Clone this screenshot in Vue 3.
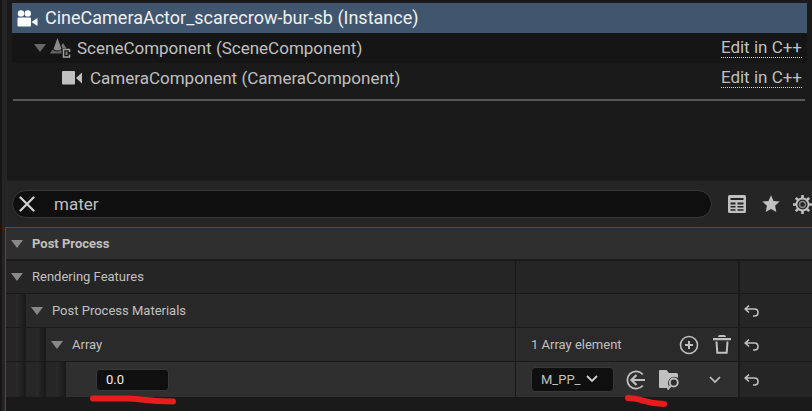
<script setup>
import { ref } from 'vue'

const query = ref('mater')
const intensity = ref('0.0')
const asset = ref('M_PP_')

const rows = [
  { id: 'rendering', label: 'Rendering Features', depth: 0 },
  { id: 'materials', label: 'Post Process Materials', depth: 1, reset: true },
  { id: 'array', label: 'Array', depth: 2, reset: true },
  { id: 'item', label: '', depth: 3, reset: true },
]
</script>

<template>
  <main class="panel">
    <section class="tree" aria-label="Components">
      <div class="node selected">
        <svg class="cine" width="21" height="17" viewBox="0 0 21 17" aria-hidden="true">
          <circle cx="4" cy="3.4" r="3.2" /><circle cx="10.8" cy="3.4" r="3.2" />
          <rect x="0.5" y="7.5" width="13.5" height="9" rx="1" />
          <path d="M14.5 12L20.500 8v8z" />
        </svg>
        <span>CineCameraActor_scarecrow-bur-sb (Instance)</span>
      </div>
      <div class="node scene">
        <button class="toggle dim" aria-label="Collapse SceneComponent">
          <svg width="12" height="8" viewBox="0 0 12 8"><path d="M0 0h12L6 8z" /></svg>
        </button>
        <svg class="scene-icon" width="21" height="20" viewBox="0 0 21 20" aria-hidden="true">
          <path d="M7.5 0L11.5 11Q7.5 14 3.5 11z" fill="#8b8b8b" />
          <path d="M13 5l3.500 5.500h-4l-1-3z" fill="#777" />
          <path d="M2.500 11.500Q7 15 11.500 12v3.500H0z" fill="#626262" />
          <path d="M19.500 14v-2.500h-6v7.500h6v-2.500" fill="none" stroke="#a0a0a0" stroke-width="1.500" />
          <path d="M15.500 13.500h2v3.500h-2z" fill="#777" />
        </svg>
        <span>SceneComponent (SceneComponent)</span>
        <a href="#scene">Edit in C++</a>
      </div>
      <div class="node camera">
        <svg class="cam-icon" width="21" height="14" viewBox="0 0 21 14" aria-hidden="true">
          <rect width="13" height="13.5" rx="1" /><path d="M14 7l6-5.500v11z" />
        </svg>
        <span>CameraComponent (CameraComponent)</span>
        <a href="#camera">Edit in C++</a>
      </div>
      <hr />
    </section>

    <section class="toolbar">
      <div class="search">
        <button aria-label="Clear search">
          <svg width="16" height="16" viewBox="0 0 16 16"><path d="M1.500 1.500l13 13M14.500 1.500l-13 13" fill="none" stroke="#d0d0d0" stroke-width="2.200" stroke-linecap="round" /></svg>
        </button>
        <input v-model="query" type="text" aria-label="Search details" />
      </div>
      <button aria-label="Property matrix">
        <svg width="18" height="18" viewBox="0 0 18 18">
          <rect width="18" height="18" rx="1.500" />
          <path d="M2.500 3h13v2h-13zM2.500 7.500h5v2h-5zM9.500 7.500h6v2h-6zM2.500 11h5v1.500h-5zM9.500 11h6v1.500h-6zM2.500 14.200h5v1.600h-5zM9.500 14.200h6v1.600h-6z" fill="#252525" />
        </svg>
      </button>
      <button aria-label="Favorites">
        <svg width="18" height="18" viewBox="0 0 18 18"><path d="M9 .3l2.500 5.600 6.100.7-4.500 4.100 1.200 6.300L9 14l-5.300 3 1.200-6.300L.4 6.600l6.100-.7z" /></svg>
      </button>
      <button aria-label="Settings">
        <svg width="19" height="19" viewBox="0 0 19 19" fill="none" stroke="#c0c0c0">
          <circle cx="9.500" cy="9.500" r="6" stroke-width="1.800" />
          <circle cx="9.500" cy="9.500" r="3" stroke="#858585" stroke-width="1.400" />
          <path d="M9.500 0v3M9.500 16v3M0 9.500h3M16 9.500h3M2.800 2.800l2.200 2.200M14 14l2.200 2.200M2.800 16.200L5 14M14 5l2.200-2.200" stroke-width="2.600" />
        </svg>
      </button>
    </section>

    <section class="details">
      <h2>
        <button class="toggle" aria-label="Collapse Post Process">
          <svg width="12" height="8" viewBox="0 0 12 8"><path d="M0 0h12L6 8z" /></svg>
        </button>
        Post Process
      </h2>
      <div v-for="row in rows" :key="row.id" class="row" :class="row.id">
        <div class="name">
          <i v-for="n in row.depth" :key="n" class="indent"></i>
          <div class="label">
            <template v-if="row.label">
              <button class="toggle" :aria-label="'Collapse ' + row.label">
                <svg width="12" height="8" viewBox="0 0 12 8"><path d="M0 0h12L6 8z" /></svg>
              </button>
              <span>{{ row.label }}</span>
            </template>
            <div v-else class="marked number">
              <input v-model="intensity" type="text" aria-label="Blend weight" />
              <svg class="mark" width="86" height="10" viewBox="0 0 86 10" aria-hidden="true"><path d="M3 3.500H38C49 3.500 56 6.500 83 6.500" /></svg>
            </div>
          </div>
        </div>
        <div class="value">
          <template v-if="row.id === 'array'">
            <span class="count">1 Array element</span>
            <button aria-label="Add element">
              <svg width="20" height="20" viewBox="0 0 20 20" fill="none" stroke="#c0c0c0"><circle cx="10" cy="10" r="8.500" stroke-width="1.600" /><path d="M10 6v8M6 10h8" stroke-width="2" /></svg>
            </button>
            <button class="trash" aria-label="Remove all elements">
              <svg width="18" height="19" viewBox="0 0 18 19"><path d="M5 2Q5 0 7 0h4Q13 0 13 2zM0 3h18v2.200H0z" /><path d="M3.500 6.500l.8 11.300h9.400L14.500 6.500" fill="none" stroke="#c0c0c0" stroke-width="2" /></svg>
            </button>
          </template>
          <template v-if="row.id === 'item'">
            <div class="picker">
              <select v-model="asset" aria-label="Material asset"><option>M_PP_</option></select>
              <svg width="12" height="8" viewBox="0 0 12 8" aria-hidden="true"><path d="M1 1l5 5 5-5" fill="none" stroke="#d0d0d0" stroke-width="1.800" /></svg>
            </div>
            <div class="marked use">
              <button aria-label="Use selected asset">
                <svg width="20" height="20" viewBox="0 0 20 20" fill="none" stroke="#c0c0c0" stroke-width="1.800"><path d="M16.800 4.500A8.700 8.700 0 1 0 16.800 15.500" /><path d="M19 10H6M10.500 5L5.500 10l5 5" stroke-width="2.200" /></svg>
              </button>
              <svg class="mark" width="42" height="12" viewBox="0 0 42 12" aria-hidden="true"><path d="M3 3C16 3 20 8.500 39 9" /></svg>
            </div>
            <button class="browse" aria-label="Browse to asset">
              <svg width="20" height="20" viewBox="0 0 20 20"><path d="M0 1Q0 0 1 0h6.500l2.500 3h7.500Q19 3 19 4.500V8q-5.500-3-9 1.500-2 4 0 6.500L8.500 18H1Q0 18 0 17z" /><circle cx="14.800" cy="12.500" r="4" fill="none" stroke="#c0c0c0" stroke-width="1.800" /><path d="M12 15.500L8.500 19.500" stroke="#c0c0c0" stroke-width="2" /></svg>
            </button>
            <button class="more" aria-label="More options">
              <svg width="12" height="8" viewBox="0 0 12 8"><path d="M1 1l5 5 5-5" fill="none" stroke="#c0c0c0" stroke-width="1.700" /></svg>
            </button>
          </template>
        </div>
        <div class="reset">
          <button v-if="row.reset" aria-label="Reset to default">
            <svg width="15" height="12" viewBox="0 0 15 12" fill="none" stroke="#c0c0c0" stroke-width="1.600"><path d="M5 .7L1.200 4 5 7.500M1.200 4H10.500Q14 4 14 7.500T10.500 11H9" /></svg>
          </button>
        </div>
      </div>
    </section>
  </main>
</template>

<style>
body { background: #1a1a1a; }
</style>

<style scoped>
.panel {
  box-sizing: border-box;
  min-height: 100vh;
  overflow: hidden;
  border-left: 2px solid #161616;
  background: #252525;
  color: #c0c0c0;
  font: 13px/18px Roboto, sans-serif;
}
svg { display: block; flex: none; fill: #c0c0c0; }
svg[fill="none"] { fill: none; }
button { display: flex; flex: none; padding: 0; border: 0; background: none; cursor: pointer; }
input, select { box-sizing: border-box; min-width: 0; font: inherit; color: inherit; outline: 0; }

.tree {
  box-sizing: border-box;
  height: 181px;
  margin-left: 5px;
  padding: 3px 5px 0;
  background: #1a1a1a;
  border-bottom: 1px solid #1e1e1e;
  font-size: 17px;
  line-height: 20px;
}
.node { display: flex; align-items: center; height: 30px; padding-right: 5px; }
.selected { padding-left: 5px; gap: 7px; background: #40566f; color: #f0f0f0; font-size: 18px; }
.cine { fill: #fff; }
.scene { padding-left: 22px; background: #151515; }
.scene-icon { margin: 0 6px 0 4px; }
.camera { padding-left: 50px; gap: 7px; }
.node a {
  margin-left: auto;
  color: inherit;
  text-decoration: none;
  line-height: 19px;
  border-bottom: 1px dotted #e0e0e0;
}
hr { height: 2px; margin: 6px 2px 0 1px; border: 0; background: #575757; }

.toolbar { display: flex; align-items: center; gap: 16px; height: 46px; padding-left: 10px; }
.search {
  display: flex;
  flex: 1;
  align-items: center;
  gap: 19px;
  box-sizing: border-box;
  height: 28px;
  padding: 0 6px;
  border: 1px solid #383838;
  border-radius: 14px;
  background: #0f0f0f;
}
.search input { flex: 1; padding: 0; border: 0; background: none; font-size: 17px; line-height: 20px; }
.toolbar > button:last-child { margin-left: -3px; }

.details { margin-left: 3px; border-top: 1px solid #0f5ba5; border-left: 1px solid #0f5ba5; background: #1a1a1a; padding-bottom: 14px; }
h2 {
  display: flex;
  align-items: center;
  gap: 9px;
  height: 31px;
  margin: 0;
  padding-left: 5px;
  border-bottom: 2px solid #1a1a1a;
  background: #2f2f2f;
  font-size: 13px;
  font-weight: 700;
}
.toggle svg { fill: #888; }
.toggle.dim svg { fill: #666; }
.row { display: grid; grid-template-columns: minmax(0, 1fr) 223px 74px; height: 33px; margin-bottom: 1px; }
.rendering { height: 32px; }
.item { height: 35px; margin-bottom: 0; }
.name { display: flex; }
.indent { width: 19px; border-right: 1px solid #1b1b1b; background: linear-gradient(90deg, #262626 50%, #2a2a2a 55%, #1a1a1a 100%); }
.label { display: flex; flex: 1; align-items: center; gap: 9px; padding-left: 5px; background: #252525; }
.value { display: flex; align-items: center; box-sizing: border-box; padding-left: 15px; border-left: 1px solid #1a1a1a; background: #252525; }
.reset { display: flex; align-items: center; padding-left: 4px; border-left: 2px solid #1a1a1a; background: #252525; }
.materials .label, .materials .value { background: #292929; }
.array .label, .array .value { background: #2a2a2a; }
.item .label, .item .value { background: #2f2f2f; }
.count { width: 148px; }
.trash { margin-left: 14px; }

.marked { position: relative; }
.mark { position: absolute; top: 100%; left: 0; fill: none; pointer-events: none; }
.mark path { stroke: #e81c1c; stroke-width: 6; stroke-linecap: round; }
.number { margin-left: 25px; }
.number .mark { margin: 4px 0 0 -6px; }
.number input { display: block; width: 73px; height: 22px; padding: 0 9px; border: 1px solid #383838; border-radius: 4px; background: #0f0f0f; color: #f0f0f0; }
.picker { position: relative; }
.picker select { display: block; width: 83px; height: 25px; padding: 0 9px; appearance: none; border: 1px solid #383838; border-radius: 4px; background: #0f0f0f; }
.picker svg { position: absolute; top: 8px; right: 16px; pointer-events: none; }
.use { margin-left: 12px; }
.use .mark { margin: 5px 0 0 -1px; }
.browse { margin-left: 13px; }
.more { margin-left: 30px; }
</style>
